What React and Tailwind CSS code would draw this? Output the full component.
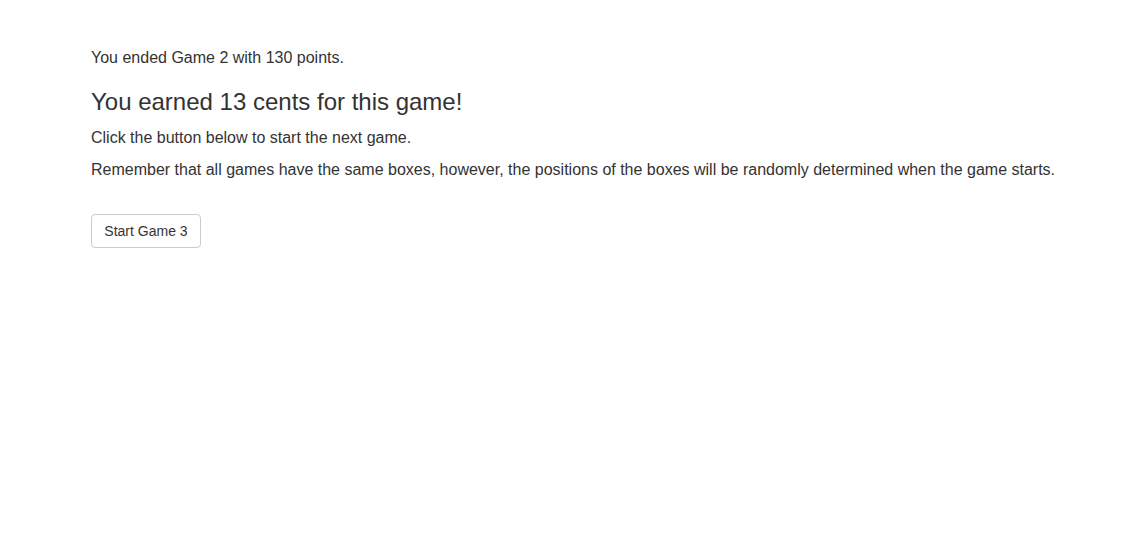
export default function App() {
  return (
    <div className="min-h-[552px] bg-white text-[#333] pl-[91px] pt-[47px]" style={{ fontFamily: '"Liberation Sans", Arial, sans-serif' }}>
      <p className="text-[16px] leading-[22px]">You ended Game 2 with 130 points.</p>
      <h3 className="mt-[20px] text-[24px] leading-[26px] font-normal">You earned 13 cents for this game!</h3>
      <p className="mt-[12px] text-[16px] leading-[22px]">Click the button below to start the next game.</p>
      <p className="mt-[10px] text-[16px] leading-[22px]">Remember that all games have the same boxes, however, the positions of the boxes will be randomly determined when the game starts.</p>
      <button className="mt-[33px] h-[34px] w-[110px] border border-[#ccc] rounded-[4px] bg-white text-[14px] text-[#333]">Start Game 3</button>
    </div>
  );
}
